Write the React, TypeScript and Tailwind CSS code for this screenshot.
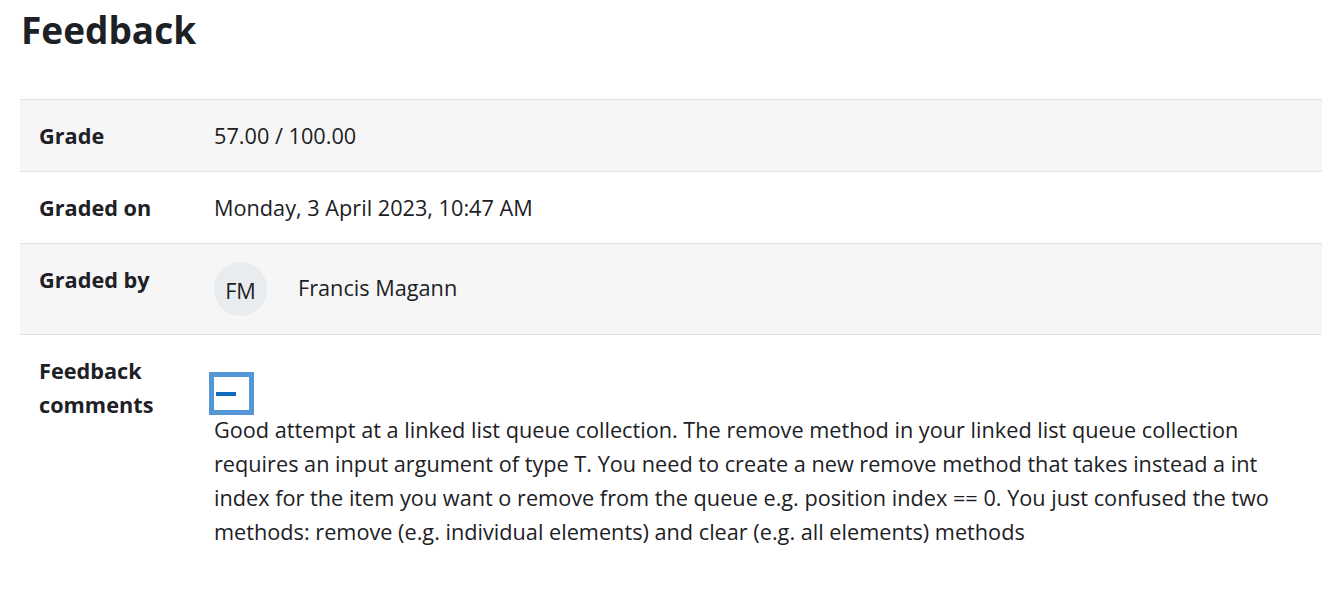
import React from 'react'

const font = { fontFamily: '"Open Sans", "Noto Sans", sans-serif' }

function Row({ label, children, striped }: { label: React.ReactNode; children: React.ReactNode; striped?: boolean }) {
    return (
        <div className={`grid grid-cols-[194px_1fr] border-t border-[#dee2e6] ${striped ? 'bg-[#f6f6f6]' : 'bg-white'}`}>
            <div className='pl-[19px] pr-3 pt-[19px] pb-[18px] font-bold text-[21.7px] leading-[34px]'>{label}</div>
            <div className='pr-[18px] pt-[19px] pb-[18px] text-[21.7px] leading-[34px]'>{children}</div>
        </div>
    )
}

export default function App() {
    return (
        <div className='bg-white text-[#1d2125] min-h-screen px-[20px]' style={font}>
            <h2 className='font-bold text-[37px] leading-[44px] mt-[8px] mb-[47px] pl-[1px]'>Feedback</h2>
            <div className='w-[1302px]'>
                <Row label='Grade' striped>57.00 / 100.00</Row>
                <Row label='Graded on'>Monday, 3 April 2023, 10:47 AM</Row>
                <div className='grid grid-cols-[194px_1fr] border-t border-b border-[#dee2e6] bg-[#f6f6f6]'>
                    <div className='pl-[19px] pt-[19px] font-bold text-[21.7px] leading-[34px]'>Graded by</div>
                    <div className='flex items-center gap-[31px] py-[18px]'>
                        <div className='w-[53px] h-[54px] rounded-full bg-[#e9ecef] flex items-center justify-center text-[21.7px] pt-[4px]'>FM</div>
                        <span className='text-[21.7px] leading-[34px] -mt-[3px]'>Francis Magann</span>
                    </div>
                </div>
                <div className='grid grid-cols-[194px_1fr]'>
                    <div className='pl-[19px] pt-[19px] font-bold text-[21.7px] leading-[34px]'>Feedback<br />comments</div>
                    <div className='pt-[18px] pr-[18px]'>
                        <button className='mt-[19px] -ml-[5px] w-[45px] h-[43px] border-[5px] border-[#5597d6] bg-white flex items-center pl-[2px]'>
                            <span className='block w-[20px] h-[4px] bg-[#0f6cbf]'></span>
                        </button>
                        <p className='text-[21.7px] leading-[34px] -mt-[2px]'>
                            Good attempt at a linked list queue collection. The remove method in your linked list queue collection requires an input argument of type T. You need to create a new remove method that takes instead a int index for the item you want o remove from the queue e.g. position index == 0. You just confused the two methods: remove (e.g. individual elements) and clear (e.g. all elements) methods
                        </p>
                    </div>
                </div>
            </div>
        </div>
    )
}
